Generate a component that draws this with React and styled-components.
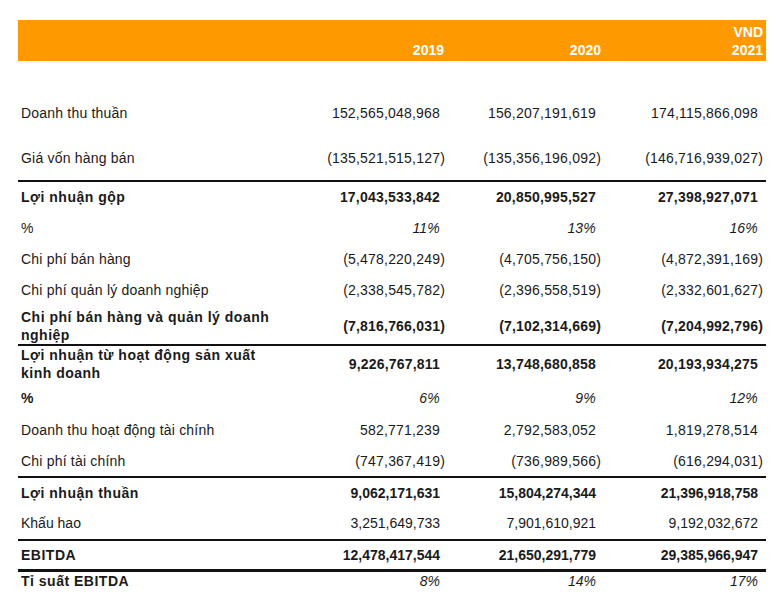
import React from 'react';
import styled, { createGlobalStyle } from 'styled-components';

const GlobalStyle = createGlobalStyle`
  body {
    margin: 0;
    background: #fff;
    font-family: "Liberation Sans", Arial, sans-serif;
  }
`;

const Page = styled.div`
  padding: 20px 13px 0 18px;
  width: 748px;
`;

const Header = styled.div`
  display: grid;
  grid-template-columns: 277px 150px 156px 162px;
  padding-right: 3px;
  height: 41px;
  background: #ff9900;
  color: #fff;
  font-weight: bold;
  font-size: 14px;
  line-height: 18px;
`;

const HeadCell = styled.div`
  display: flex;
  flex-direction: column;
  justify-content: flex-end;
  align-items: flex-end;
  padding: 2px ${({ $pr }) => $pr || 0}px 2px 0;
`;

const Spacer = styled.div`
  height: 29px;
`;

const Row = styled.div`
  display: grid;
  grid-template-columns: 277px 150px 156px 162px;
  padding-right: 3px;
  height: ${({ $h }) => $h}px;
  padding-top: ${({ $pt }) => $pt || 0}px;
  box-sizing: border-box;
  border-top: ${({ $line }) => ($line ? `${$line}px solid #111` : 'none')};
  align-items: center;
  color: #1a1a1a;
  font-size: 14px;
  letter-spacing: ${({ $tight }) => ($tight ? '0' : '0.2px')};
`;

const Label = styled.div`
  padding-left: 3px;
  max-width: 261px;
  line-height: 18px;
  font-weight: ${({ $bold }) => ($bold ? 'bold' : 'normal')};
  letter-spacing: ${({ $bold }) => ($bold ? '0.5px' : 'inherit')};
`;

const Value = styled.div`
  text-align: right;
  font-weight: ${({ $bold }) => ($bold ? 'bold' : 'normal')};
  font-style: ${({ $italic }) => ($italic ? 'italic' : 'normal')};
  padding-right: ${({ $neg }) => ($neg ? 0 : 5)}px;
`;

const rows = [
  { label: 'Doanh thu thuần', values: ['152,565,048,968', '156,207,191,619', '174,115,866,098'], h: 45 },
  { label: 'Giá vốn hàng bán', values: ['(135,521,515,127)', '(135,356,196,092)', '(146,716,939,027)'], h: 45 },
  { label: 'Lợi nhuận gộp', values: ['17,043,533,842', '20,850,995,527', '27,398,927,071'], h: 32, line: 2, bold: true },
  { label: '%', values: ['11%', '13%', '16%'], h: 31, italic: true },
  { label: 'Chi phí bán hàng', values: ['(5,478,220,249)', '(4,705,756,150)', '(4,872,391,169)'], h: 31 },
  { label: 'Chi phí quản lý doanh nghiệp', values: ['(2,338,545,782)', '(2,396,558,519)', '(2,332,601,627)'], h: 31 },
  { label: 'Chi phí bán hàng và quản lý doanh nghiệp', values: ['(7,816,766,031)', '(7,102,314,669)', '(7,204,992,796)'], h: 39, pt: 3, bold: true },
  { label: 'Lợi nhuận từ hoạt động sản xuất kinh doanh', values: ['9,226,767,811', '13,748,680,858', '20,193,934,275'], h: 38, line: 2, bold: true },
  { label: '%', values: ['6%', '9%', '12%'], h: 32, italic: true, boldLabel: true },
  { label: 'Doanh thu hoạt động tài chính', values: ['582,771,239', '2,792,583,052', '1,819,278,514'], h: 32 },
  { label: 'Chi phí tài chính', values: ['(747,367,419)', '(736,989,566)', '(616,294,031)'], h: 30 },
  { label: 'Lợi nhuận thuần', values: ['9,062,171,631', '15,804,274,344', '21,396,918,758'], h: 31, line: 2, bold: true, tight: true },
  { label: 'Khấu hao', values: ['3,251,649,733', '7,901,610,921', '9,192,032,672'], h: 32, tight: true },
  { label: 'EBITDA', values: ['12,478,417,544', '21,650,291,779', '29,385,966,947'], h: 30, line: 2, bold: true, tight: true },
  { label: 'Tỉ suất EBITDA', values: ['8%', '14%', '17%'], h: 19, line: 3, italic: true, boldLabel: true, tight: true },
];

export default function App() {
  return (
    <>
      <GlobalStyle />
      <Page>
        <Header>
          <div />
          <HeadCell $pr={1}>2019</HeadCell>
          <HeadCell $pr={0}>2020</HeadCell>
          <HeadCell $pr={0}>
            <span>VND</span>
            <span>2021</span>
          </HeadCell>
        </Header>
        <Spacer />
        {rows.map((r, i) => (
          <Row key={i} $h={r.h} $pt={r.pt} $line={r.line} $tight={r.tight}>
            <Label $bold={r.bold || r.boldLabel}>{r.label}</Label>
            {r.values.map((v, j) => (
              <Value key={j} $bold={r.bold} $italic={r.italic} $neg={v.startsWith('(')}>
                {v}
              </Value>
            ))}
          </Row>
        ))}
      </Page>
    </>
  );
}
